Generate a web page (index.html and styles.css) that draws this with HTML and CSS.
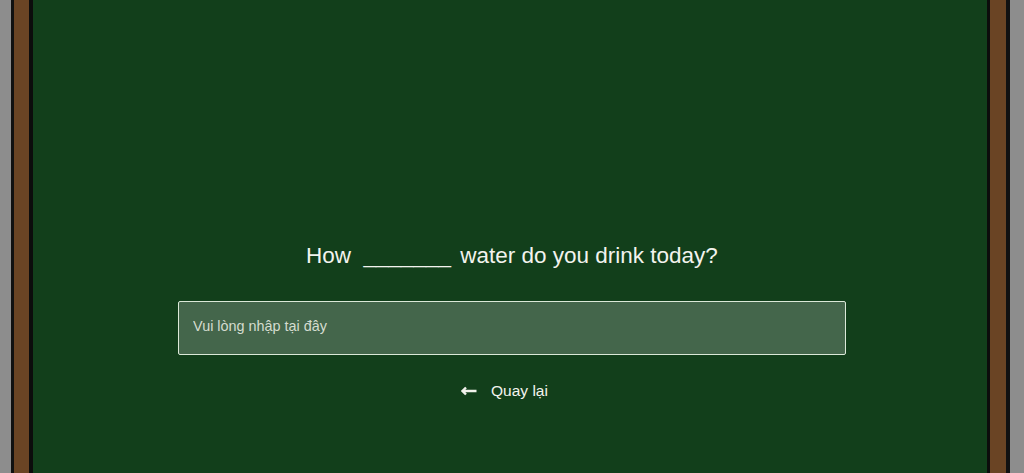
FILE: index.html
```html
<!DOCTYPE html>
<html lang="vi">
<head>
<meta charset="utf-8">
<link rel="stylesheet" href="styles.css">
</head>
<body>
<div class="frame">
  <div class="wood">
    <main class="board">
      <p class="question">How <span class="blank">_______</span> water do you drink today?</p>
      <input class="answer" type="text" placeholder="Vui lòng nhập tại đây">
      <a class="back" href="#">
        <svg class="arrow" width="16" height="10" viewBox="0 0 16 10"><path d="M5 1.5 L1.5 5 L5 8.5 M1.5 5 H15.5" fill="none" stroke="#f2f2ec" stroke-width="2.4"/></svg>
        <span>Quay lại</span>
      </a>
    </main>
  </div>
</div>
</body>
</html>
```

FILE: styles.css
```css
html, body {
  margin: 0;
  padding: 0;
  height: 100%;
}
body {
  background: #8d8d8d;
  font-family: "Liberation Sans", Arial, sans-serif;
  overflow: hidden;
}
.frame {
  margin: 0 14px 0 11px;
  height: 473px;
  border-left: 3px solid #111;
  border-right: 4px solid #111;
  background: #6a4424;
  padding: 0 16px 0 15px;
}
.wood {
  height: 100%;
  border-left: 4px solid #0c0c0c;
  border-right: 3px solid #0c0c0c;
}
.board {
  height: 100%;
  background: #123f1b;
  display: flex;
  flex-direction: column;
  align-items: center;
  padding-top: 239px;
  box-sizing: border-box;
}
.question {
  margin: 0 0 0 4px;
  color: #f3f3ee;
  font-size: 22.5px;
  line-height: 34px;
}
.blank {
  margin: 0 3px 0 6px;
}
.answer {
  margin: 28px 0 0 4px;
  width: 70%;
  height: 54px;
  box-sizing: border-box;
  background: #44664b;
  border: 1.5px solid #dbe8d8;
  border-radius: 2px;
  padding: 0 14px 4px;
  font-family: "Liberation Sans", Arial, sans-serif;
  font-size: 14.4px;
  color: #eee;
  outline: none;
}
.answer::placeholder {
  color: #d4dccf;
}
.back {
  margin-top: 25px;
  display: flex;
  align-items: center;
  gap: 14px;
  color: #f3f3ee;
  text-decoration: none;
  font-size: 15.5px;
  line-height: 22px;
  margin-left: -11px;
}
.arrow {
  display: block;
}
```
